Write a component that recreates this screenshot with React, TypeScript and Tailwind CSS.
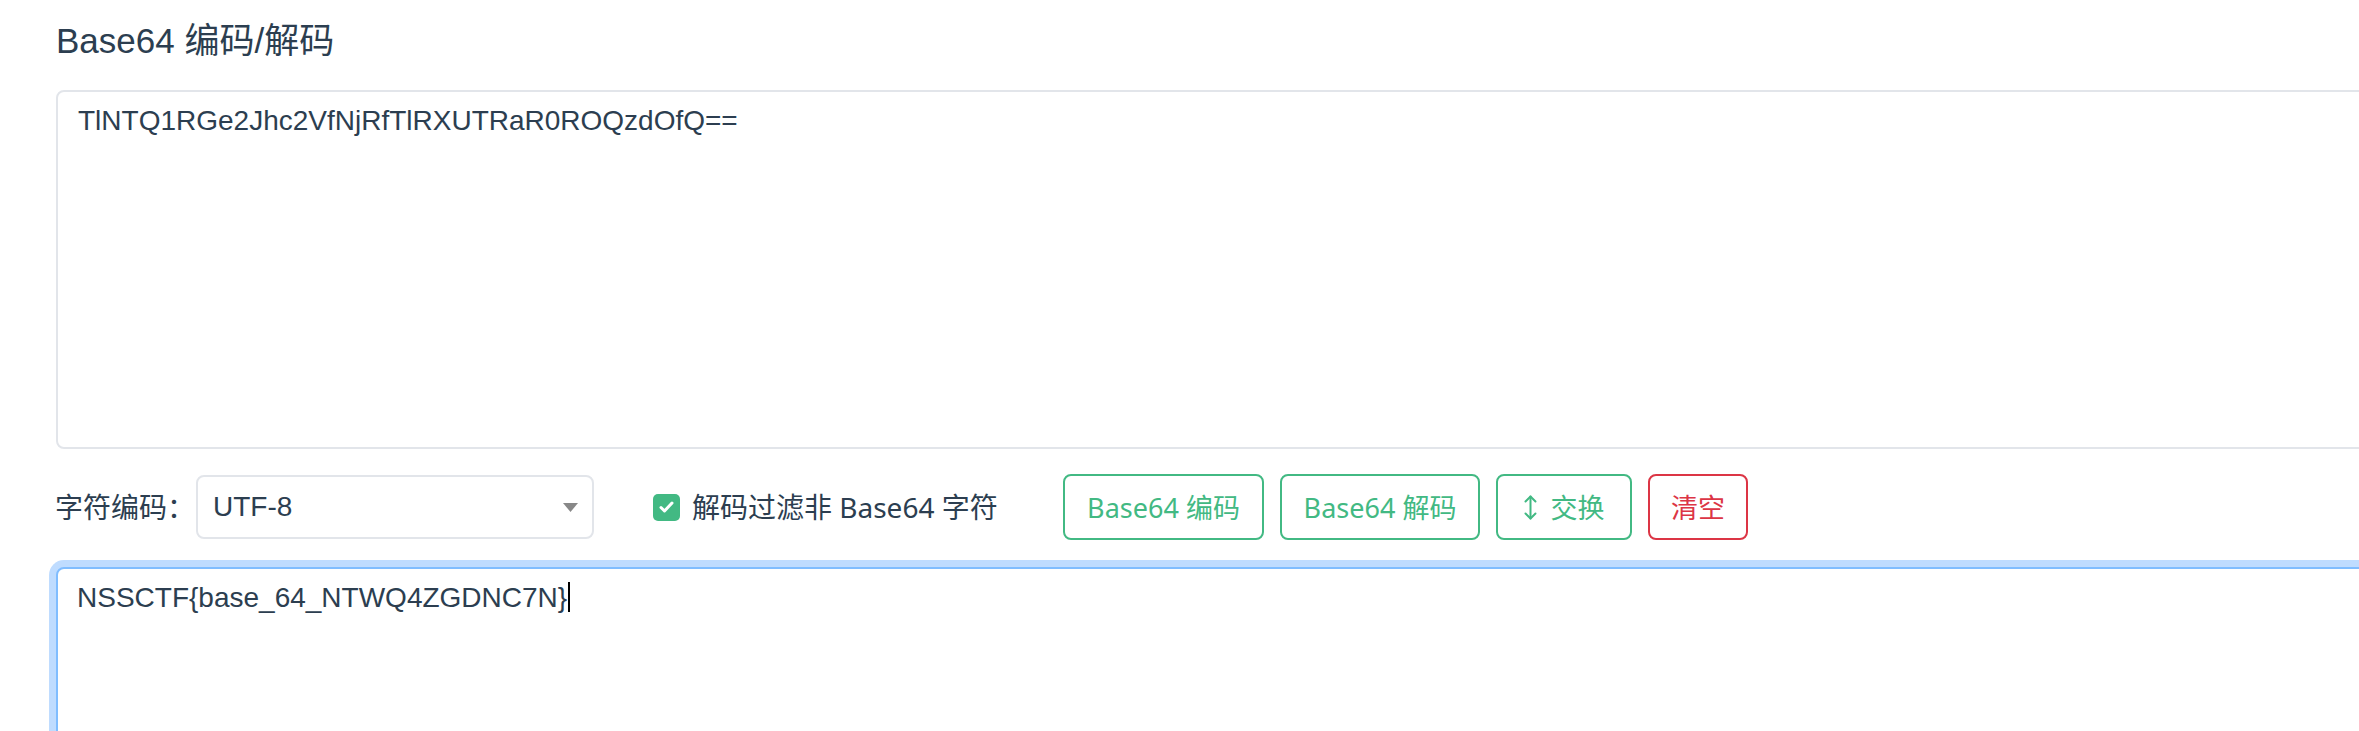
import React from 'react';

const sans = "font-['Liberation_Sans','Noto_Sans_CJK_SC',sans-serif]";
const ui = "font-['Noto_Sans','Noto_Sans_CJK_SC',sans-serif]";

const buttons = [
  { label: 'Base64 编码', width: 'w-[201px]', tone: 'green' },
  { label: 'Base64 解码', width: 'w-[200px]', tone: 'green' },
  { label: '交换', width: 'w-[136px]', tone: 'swap' },
  { label: '清空', width: 'w-[100px]', tone: 'red' },
];

function SwapIcon() {
  return (
    <svg width="13" height="25" viewBox="0 0 13 25" fill="none" stroke="#42b983" strokeWidth="2" strokeLinecap="round" strokeLinejoin="round" className="mr-[14px]">
      <path d="M6.5 1.5v22" />
      <path d="M1.5 6.5l5-5 5 5" />
      <path d="M1.5 18.5l5 5 5-5" />
    </svg>
  );
}

export default function App() {
  return (
    <div className="h-[731px] w-full overflow-hidden bg-white pl-[56px] pt-[15px] text-[#2c3e50]">
      <h1 className={`${sans} text-[35px] leading-[52px] font-normal`}>Base64 编码/解码</h1>

      {/* input */}
      <textarea
        className={`${sans} mt-[23px] block h-[359px] w-[2400px] resize-none rounded-[8px] border-2 border-[#e2e5ea] bg-white px-[20px] pt-[8px] text-[28px] leading-[42px] text-[#2c3e50] outline-none`}
        defaultValue="TlNTQ1RGe2Jhc2VfNjRfTlRXUTRaR0ROQzdOfQ=="
      />

      {/* toolbar */}
      <div className="mt-[25px] flex h-[66px] items-center">
        <span className={`${ui} -ml-px w-[141px] text-[28px] leading-none whitespace-nowrap`}>字符编码：</span>
        <div className="flex h-[64px] w-[398px] items-center justify-between rounded-[8px] border-2 border-[#e2e5ea] pl-[15px] pr-[14px]">
          <span className={`${sans} text-[28px] leading-none`}>UTF-8</span>
          <svg width="15" height="9" viewBox="0 0 15 9">
            <polygon points="0,0 15,0 7.5,9" fill="#888" />
          </svg>
        </div>

        <label className="ml-[59px] flex w-[410px] items-center">
          <span className="flex h-[27px] w-[27px] items-center justify-center rounded-[5px] bg-[#42b983]">
            <svg width="15" height="12" viewBox="0 0 15 12" fill="none" stroke="#fff" strokeWidth="3" strokeLinecap="round" strokeLinejoin="round">
              <path d="M2 6.5l3.5 3.5L13 2" />
            </svg>
          </span>
          <span className={`${ui} ml-[12px] text-[28px] leading-none whitespace-nowrap`}>解码过滤非 Base64 字符</span>
        </label>

        <div className="flex gap-[16px]">
          {buttons.map((b) => (
            <button
              key={b.label}
              className={`${ui} ${b.width} flex h-[66px] items-center justify-center rounded-[8px] border-2 bg-white text-[27px] leading-none whitespace-nowrap ${
                b.tone === 'red' ? 'border-[#dc3545] text-[#dc3545]' : 'border-[#42b983] text-[#42b983]'
              }`}
            >
              {b.tone === 'swap' && <SwapIcon />}
              {b.label}
            </button>
          ))}
        </div>
      </div>

      {/* output, focused */}
      <div
        role="textbox"
        className={`${sans} mt-[27px] h-[359px] w-[2400px] rounded-[8px] border-2 border-[#80bdff] bg-white px-[19px] pt-[8px] text-[28px] leading-[42px] text-[#2c3e50] shadow-[0_0_0_7px_#bfdcff]`}
      >
        NSSCTF{'{'}base_64_NTWQ4ZGDNC7N{'}'}
        <span className="ml-px inline-block h-[30px] w-[1.5px] bg-black align-[-5px]" />
      </div>
    </div>
  );
}
